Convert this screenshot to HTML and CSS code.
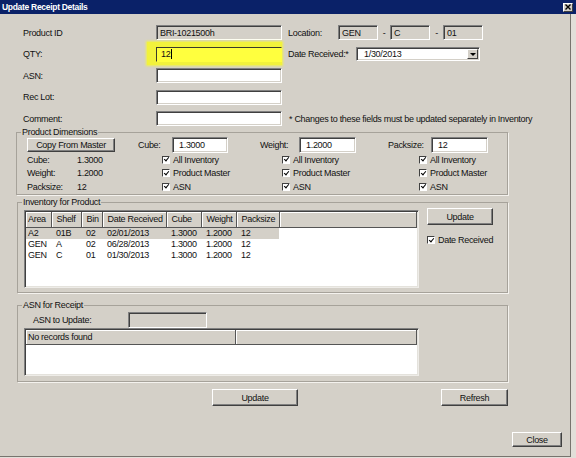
FILE: index.html
```html
<!DOCTYPE html>
<html>
<head>
<meta charset="utf-8">
<link rel="stylesheet" href="styles.css">
</head>
<body>
<div class="titlebar">
  <span class="title">Update Receipt Details</span>
  <span class="xbtn"><svg width="6" height="6" viewBox="0 0 6 6"><path d="M0.5 0.5L5.5 5.5M5.5 0.5L0.5 5.5" stroke="#000" stroke-width="1.4"/></svg></span>
</div>
<div class="window">
  <div class="topform">
    <span class="lbl">Product ID</span>
    <span class="field disabled">BRI-1021500h</span>
    <div class="right loc">
      <span class="loclbl">Location:</span>
      <span class="field disabled small">GEN</span>
      <span class="dash">-</span>
      <span class="field disabled small">C</span>
      <span class="dash d2">-</span>
      <span class="field disabled small">01</span>
    </div>

    <span class="lbl">QTY:</span>
    <div class="hl"><span class="field qty">12<span class="caret"></span></span></div>
    <div class="right loc">
      <span class="datelbl">Date Received:*</span>
      <span class="combo"><span>1/30/2013</span><span class="drop"><span class="tri"></span></span></span>
    </div>

    <span class="lbl">ASN:</span>
    <span class="field"></span>

    <span class="lbl">Rec Lot:</span>
    <span class="field"></span>

    <span class="lbl">Comment:</span>
    <span class="field"></span>
    <span class="right note">* Changes to these fields must be updated separately in Inventory</span>
  </div>

  <fieldset class="group dims">
    <legend>Product Dimensions</legend>
    <div class="dimgrid">
      <span class="btn copy">Copy From Master</span>
      <div class="dimfield c34"><span class="w34">Cube:</span><span class="field dim">1.3000</span></div>
      <div class="dimfield c56"><span class="w39">Weight:</span><span class="field dim">1.2000</span></div>
      <div class="dimfield c78"><span class="w43">Packsize:</span><span class="field dim">12</span></div>

      <span>Cube:</span><span>1.3000</span>
      <span class="check k4"><span class="cb"></span>All Inventory</span>
      <span class="check k6"><span class="cb"></span>All Inventory</span>
      <span class="check k8"><span class="cb"></span>All Inventory</span>

      <span>Weight:</span><span>1.2000</span>
      <span class="check k4"><span class="cb"></span>Product Master</span>
      <span class="check k6"><span class="cb"></span>Product Master</span>
      <span class="check k8"><span class="cb"></span>Product Master</span>

      <span>Packsize:</span><span>12</span>
      <span class="check k4"><span class="cb"></span>ASN</span>
      <span class="check k6"><span class="cb"></span>ASN</span>
      <span class="check k8"><span class="cb"></span>ASN</span>
    </div>
  </fieldset>

  <fieldset class="group inv">
    <legend>Inventory for Product</legend>
    <div class="invbody">
      <div class="list invlist">
        <table>
          <colgroup>
            <col style="width:25px"><col style="width:30px"><col style="width:21px"><col style="width:64px"><col style="width:35px"><col style="width:35px"><col style="width:43px"><col>
          </colgroup>
          <thead>
            <tr><th class="first">Area</th><th>Shelf</th><th>Bin</th><th>Date Received</th><th>Cube</th><th>Weight</th><th>Packsize</th><th></th></tr>
          </thead>
          <tbody>
            <tr class="sel"><td class="first">A2</td><td>01B</td><td>02</td><td>02/01/2013</td><td>1.3000</td><td>1.2000</td><td>12</td><td class="fill"></td></tr>
            <tr><td class="first">GEN</td><td>A</td><td>02</td><td>06/28/2013</td><td>1.3000</td><td>1.2000</td><td>12</td><td class="fill"></td></tr>
            <tr><td class="first">GEN</td><td>C</td><td>01</td><td>01/30/2013</td><td>1.3000</td><td>1.2000</td><td>12</td><td class="fill"></td></tr>
          </tbody>
        </table>
      </div>
      <div class="side">
        <span class="btn upd1">Update</span>
        <span class="check dr"><span class="cb"></span>Date Received</span>
      </div>
    </div>
  </fieldset>

  <fieldset class="group asn">
    <legend>ASN for Receipt</legend>
    <div class="asnbody">
      <div class="asnrow"><span class="asnlbl">ASN to Update:</span><span class="field disabled asnfield"></span></div>
      <div class="list asnlist">
        <table>
          <colgroup><col style="width:209px"><col></colgroup>
          <thead><tr><th class="first">No records found</th><th></th></tr></thead>
        </table>
      </div>
    </div>
  </fieldset>

  <div class="actions">
    <span class="btn upd2">Update</span>
    <span class="btn refresh">Refresh</span>
  </div>
  <div class="closerow">
    <span class="btn close">Close</span>
  </div>
</div>
</body>
</html>
```

FILE: styles.css
```css
* { box-sizing: border-box; }
html, body { margin: 0; padding: 0; }
body {
  width: 576px;
  height: 458px;
  overflow: hidden;
  background: #e2dfd9;
  font-family: "Liberation Sans", Arial, sans-serif;
  font-size: 9px;
  letter-spacing: -0.3px;
  color: #111;
}

.titlebar {
  height: 14px;
  background: #0a2168;
  display: flex;
  align-items: center;
  justify-content: space-between;
  padding: 0 3px 0 2px;
}
.title {
  color: #fff;
  font-weight: bold;
  font-size: 8.5px;
  letter-spacing: -0.3px;
}
.xbtn {
  width: 10px;
  height: 9px;
  background: #d4d0c8;
  border: 1px solid;
  border-color: #fff #404040 #404040 #fff;
  display: flex;
  align-items: center;
  justify-content: center;
}

.window {
  width: 571px;
  height: 443px;
  background: #d4d0c8;
  border-right: 1px solid #77746e;
  border-bottom: 1px solid #77746e;
}

/* ---------- generic controls ---------- */
.field {
  display: flex;
  align-items: center;
  height: 15px;
  background: #fff;
  border: 1px solid;
  border-color: #808080 #fff #fff #808080;
  box-shadow: inset 1px 1px 0 #404040, inset -1px -1px 0 #d4d0c8;
  padding-left: 3px;
  white-space: nowrap;
}
.field.disabled { background: #d4d0c8; }

.btn {
  display: flex;
  align-items: center;
  justify-content: center;
  background: #d4d0c8;
  border: 1px solid;
  border-color: #fff #404040 #404040 #fff;
  box-shadow: inset -1px -1px 0 #808080;
  white-space: nowrap;
}

.check {
  display: flex;
  align-items: center;
  gap: 3px;
  white-space: nowrap;
}
.cb {
  position: relative;
  flex: none;
  width: 8px;
  height: 8px;
  background: #fff;
  border: 1px solid;
  border-color: #404040 #fff #fff #404040;
  box-shadow: 1px 1px 0 #d4d0c8;
}
.cb::after {
  content: "";
  position: absolute;
  left: 1.5px;
  top: -0.5px;
  width: 2px;
  height: 4px;
  border: solid #000;
  border-width: 0 1.6px 1.6px 0;
  transform: rotate(40deg);
}

/* ---------- top form ---------- */
.topform {
  display: grid;
  grid-template-columns: 133px 126px 6px 1fr;
  grid-template-rows: repeat(5, 15px);
  row-gap: 6.5px;
  align-items: center;
  padding: 11px 0 0 23px;
}
.lbl { grid-column: 1; }
.right { grid-column: 4; }
.loc { display: flex; align-items: center; }
.loclbl { width: 50px; }
.field.small { width: 40px; }
.dash { width: 12px; text-align: center; }
.dash.d2 { width: 13px; }
.datelbl { width: 68px; }
.combo {
  width: 124px;
  height: 14px;
  display: flex;
  align-items: center;
  justify-content: space-between;
  background: #fff;
  border: 1px solid;
  border-color: #808080 #fff #fff #808080;
  box-shadow: inset 1px 1px 0 #404040, inset -1px -1px 0 #d4d0c8;
  padding: 0 1px 0 7px;
}
.drop {
  width: 11px;
  height: 10px;
  display: flex;
  align-items: center;
  justify-content: center;
  background: #d4d0c8;
  border: 1px solid;
  border-color: #fff #404040 #404040 #fff;
}
.tri {
  width: 0;
  height: 0;
  border-left: 3px solid transparent;
  border-right: 3px solid transparent;
  border-top: 3px solid #000;
}
.hl {
  grid-column: 2;
  align-self: stretch;
  margin: -5px 0 -3px -9px;
  padding: 5px 0 3px 9px;
  background: #f2f23c;
  box-shadow: 0 0 2px 1px #f0f050;
}
.field.qty {
  height: 15px;
  background: #ffff3e;
  border-color: #3a3a2a #ffff3e #ffff3e #3a3a2a;
  box-shadow: none;
  padding-left: 4px;
}
.caret { width: 1px; height: 10px; background: #000; margin-left: 1px; }
.note { grid-row: 5; padding-left: 1px; white-space: nowrap; }

/* ---------- group boxes ---------- */
fieldset.group {
  margin: 0;
  padding: 0;
  min-width: 0;
  border: 1px solid #a6a29a;
  box-shadow: 1px 1px 0 #f4f2ee;
}
fieldset.group legend {
  margin-left: 4px;
  padding: 0 1px;
  line-height: 10px;
  font-size: 9px;
}
.dims { margin: 1px 0 0 16px !important; width: 492px; }
.inv { margin: 2.5px 0 0 17px !important; width: 491px; }
.asn { margin: 7px 0 0 17px !important; width: 491px; }

.dimgrid {
  display: grid;
  grid-template-columns: 50px 61px 24px 98px 22px 106px 31px 1fr;
  grid-template-rows: 16px 13.5px 13.5px 13.5px;
  align-items: center;
  padding-left: 10px;
}
.copy { grid-column: 1 / 3; width: 88px; height: 14px; }
.dimfield { display: flex; align-items: center; }
.c34 { grid-column: 3 / 5; }
.c56 { grid-column: 5 / 7; }
.c78 { grid-column: 7 / 9; }
.w34 { width: 34px; }
.w39 { width: 39px; }
.w43 { width: 43px; }
.field.dim { width: 57px; height: 16px; padding-left: 6px; }
.c34 .field.dim { width: 56px; }
.k4 { grid-column: 4; }
.k6 { grid-column: 6; }
.k8 { grid-column: 8; }

/* ---------- lists ---------- */
.list {
  width: 395px;
  background: #fff;
  border: 1px solid;
  border-color: #808080 #eeece8 #eeece8 #808080;
  box-shadow: inset 1px 1px 0 #404040, inset -1px -1px 0 #e4e2dc;
  padding: 1px 1px 2px 1px;
  overflow: hidden;
}
.list table {
  width: 100%;
  table-layout: fixed;
  border-collapse: collapse;
}
.list th {
  height: 15px;
  padding: 0 0 0 5px;
  background: #d4d0c8;
  font-weight: normal;
  text-align: left;
  border-right: 1px solid #555;
  border-bottom: 1px solid #555;
  box-shadow: inset 1px 1px 0 #fff;
  white-space: nowrap;
  overflow: hidden;
}
.list td {
  height: 11px;
  padding: 0 0 0 5px;
  line-height: 11px;
  white-space: nowrap;
  overflow: hidden;
}
.list th.first, .list td.first { padding-left: 2px; }
.list tr.sel td { background: #d4d0c8; }
.list tr.sel td.fill { background: #fff; }

.invbody {
  display: flex;
  align-items: flex-start;
  padding: 3px 0 4px 6px;
}
.invlist { height: 78px; }
.side {
  display: flex;
  flex-direction: column;
  margin-left: 8px;
  margin-top: -2px;
}
.upd1 { width: 66px; height: 17px; }
.dr { margin-top: 10px; }

.asnbody { padding: 2px 0 5px 6px; }
.asnrow { display: flex; align-items: center; padding-left: 9px; }
.asnlbl { width: 95px; }
.asnfield { width: 79px; height: 16px; }
.asnlist { height: 48px; }
.asnlist th { height: 14px; }

/* ---------- bottom buttons ---------- */
.actions {
  display: flex;
  margin-top: 7px;
  padding-left: 212px;
}
.upd2 { width: 86px; height: 17px; }
.refresh { width: 67px; height: 17px; margin-left: 143px; }
.closerow {
  display: flex;
  margin-top: 26px;
  padding-left: 512px;
}
.close { width: 50px; height: 15px; }
```
